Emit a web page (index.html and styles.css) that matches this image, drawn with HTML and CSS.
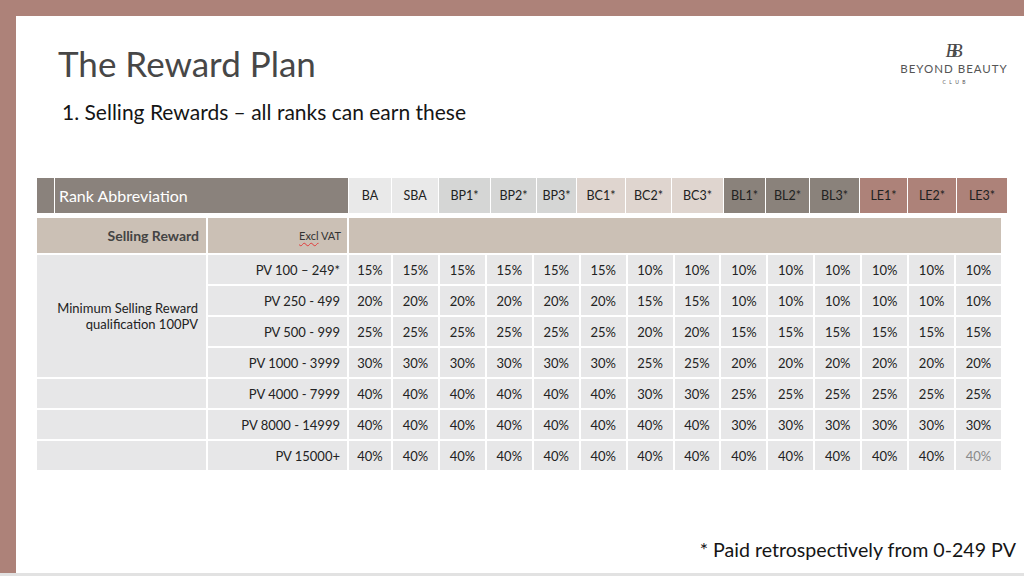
FILE: index.html
```html
<!DOCTYPE html>
<html lang="en">
<head>
<meta charset="utf-8">
<title>The Reward Plan</title>
<link rel="stylesheet" href="styles.css">
</head>
<body>
<div class="frame">
  <div class="bar-top"></div>
  <div class="bar-left"></div>
  <main class="content">
    <header class="head">
      <div class="titles">
        <h1 class="title">The Reward Plan</h1>
        <p class="subtitle">1. Selling Rewards – all ranks can earn these</p>
      </div>
      <div class="logo">
        <div class="mono">BB</div>
        <div class="brand">BEYOND BEAUTY</div>
        <div class="club">CLUB</div>
      </div>
    </header>

    <section class="rank-row">
      <div class="rank-stub"></div>
      <div class="rank-label">Rank Abbreviation</div>
      <div class="rank r-ba">BA</div>
      <div class="rank r-ba">SBA</div>
      <div class="rank r-bp">BP1*</div>
      <div class="rank r-bp">BP2*</div>
      <div class="rank r-bp">BP3*</div>
      <div class="rank r-bc">BC1*</div>
      <div class="rank r-bc">BC2*</div>
      <div class="rank r-bc">BC3*</div>
      <div class="rank r-bl">BL1*</div>
      <div class="rank r-bl">BL2*</div>
      <div class="rank r-bl">BL3*</div>
      <div class="rank r-le">LE1*</div>
      <div class="rank r-le">LE2*</div>
      <div class="rank r-le">LE3*</div>
    </section>

    <section class="grid">
      <div class="sr sr-label">Selling Reward</div>
      <div class="sr sr-vat"><span class="squiggle">Excl</span>&nbsp;VAT</div>
      <div class="sr sr-fill"></div>

      <div class="c c-min">Minimum Selling Reward<br>qualification 100PV</div>

      <div class="c c-pv">PV 100 – 249*</div>
      <div class="c">15%</div><div class="c">15%</div><div class="c">15%</div><div class="c">15%</div><div class="c">15%</div><div class="c">15%</div><div class="c">10%</div><div class="c">10%</div><div class="c">10%</div><div class="c">10%</div><div class="c">10%</div><div class="c">10%</div><div class="c">10%</div><div class="c">10%</div>

      <div class="c c-pv">PV 250 - 499</div>
      <div class="c">20%</div><div class="c">20%</div><div class="c">20%</div><div class="c">20%</div><div class="c">20%</div><div class="c">20%</div><div class="c">15%</div><div class="c">15%</div><div class="c">10%</div><div class="c">10%</div><div class="c">10%</div><div class="c">10%</div><div class="c">10%</div><div class="c">10%</div>

      <div class="c c-pv">PV 500 - 999</div>
      <div class="c">25%</div><div class="c">25%</div><div class="c">25%</div><div class="c">25%</div><div class="c">25%</div><div class="c">25%</div><div class="c">20%</div><div class="c">20%</div><div class="c">15%</div><div class="c">15%</div><div class="c">15%</div><div class="c">15%</div><div class="c">15%</div><div class="c">15%</div>

      <div class="c c-pv">PV 1000 - 3999</div>
      <div class="c">30%</div><div class="c">30%</div><div class="c">30%</div><div class="c">30%</div><div class="c">30%</div><div class="c">30%</div><div class="c">25%</div><div class="c">25%</div><div class="c">20%</div><div class="c">20%</div><div class="c">20%</div><div class="c">20%</div><div class="c">20%</div><div class="c">20%</div>

      <div class="c c-empty"></div>
      <div class="c c-pv">PV 4000 - 7999</div>
      <div class="c">40%</div><div class="c">40%</div><div class="c">40%</div><div class="c">40%</div><div class="c">40%</div><div class="c">40%</div><div class="c">30%</div><div class="c">30%</div><div class="c">25%</div><div class="c">25%</div><div class="c">25%</div><div class="c">25%</div><div class="c">25%</div><div class="c">25%</div>

      <div class="c c-empty"></div>
      <div class="c c-pv">PV 8000 - 14999</div>
      <div class="c">40%</div><div class="c">40%</div><div class="c">40%</div><div class="c">40%</div><div class="c">40%</div><div class="c">40%</div><div class="c">40%</div><div class="c">40%</div><div class="c">30%</div><div class="c">30%</div><div class="c">30%</div><div class="c">30%</div><div class="c">30%</div><div class="c">30%</div>

      <div class="c c-empty"></div>
      <div class="c c-pv">PV 15000+</div>
      <div class="c">40%</div><div class="c">40%</div><div class="c">40%</div><div class="c">40%</div><div class="c">40%</div><div class="c">40%</div><div class="c">40%</div><div class="c">40%</div><div class="c">40%</div><div class="c">40%</div><div class="c">40%</div><div class="c">40%</div><div class="c">40%</div><div class="c muted">40%</div>
    </section>

    <footer class="note">* Paid retrospectively from 0-249 PV</footer>
  </main>
  <div class="bar-bottom"></div>
</div>
</body>
</html>
```

FILE: styles.css
```css
* { box-sizing: border-box; }

html, body {
  margin: 0;
  padding: 0;
  background: #ffffff;
}

body {
  width: 1024px;
  height: 576px;
  overflow: hidden;
  font-family: Lato, "Open Sans", sans-serif;
  color: #222;
}

.frame {
  display: grid;
  grid-template-columns: 16px 1fr;
  grid-template-rows: 16px 1fr 3px;
  width: 1024px;
  height: 576px;
}

.bar-top {
  grid-column: 1 / -1;
  background: #ad8279;
}

.bar-left {
  background: #ad8279;
}

.bar-bottom {
  grid-column: 1 / -1;
  background: #e2e2e2;
}

.content {
  display: flex;
  flex-direction: column;
  padding: 25px 0 11px 21px;
  min-width: 0;
}

/* ---------- heading ---------- */
.head {
  display: flex;
  justify-content: space-between;
  align-items: flex-start;
}

.titles {
  padding-left: 21px;
}

.title {
  margin: 0;
  font-size: 35px;
  line-height: 44px;
  font-weight: 400;
  color: #474747;
}

.subtitle {
  margin: 15px 0 0 4px;
  font-size: 21px;
  line-height: 24px;
  color: #151515;
}

.logo {
  display: flex;
  flex-direction: column;
  align-items: center;
  width: 116px;
  margin-right: 12px;
  color: #555;
}

.mono {
  height: 20px;
  font-family: "Liberation Serif", serif;
  font-style: italic;
  font-size: 19px;
  line-height: 20px;
  letter-spacing: -6px;
  padding-right: 6px;
  color: #4a4a4a;
}

.brand {
  margin-top: 1px;
  font-size: 11.5px;
  line-height: 14px;
  letter-spacing: 1px;
  white-space: nowrap;
}

.club {
  margin-top: 3px;
  font-size: 5px;
  line-height: 6px;
  letter-spacing: 3.5px;
  padding-left: 3.5px;
}

/* ---------- rank header ---------- */
.rank-row {
  display: grid;
  grid-template-columns: 17px 293px 42px 46px 51px 45px 39px 48px 45px 51px 41px 43px 49px 47px 48px 50px;
  column-gap: 1px;
  height: 35px;
  margin-top: 54px;
  width: 970px;
}

.rank-stub,
.rank-label {
  background: #8a827c;
}

.rank-label {
  display: flex;
  align-items: center;
  padding-left: 4px;
  color: #ffffff;
  font-size: 16px;
}

.rank {
  display: flex;
  align-items: center;
  justify-content: center;
  font-size: 12.5px;
  color: #222;
}

.r-ba { background: #e9e9e9; }
.r-bp { background: #d5d6d5; }
.r-bc { background: #dfd5cf; }
.r-bl { background: #8a827b; }
.r-le { background: #ad8279; }

/* ---------- body grid ---------- */
.grid {
  display: grid;
  grid-template-columns: 169px 139px 42px repeat(13, 1fr);
  grid-template-rows: 35px repeat(7, 29px);
  gap: 2px;
  width: 964px;
  margin-top: 5px;
}

.sr {
  background: #cbc0b5;
  display: flex;
  align-items: center;
  justify-content: flex-end;
}

.sr-label {
  padding-right: 7px;
  font-size: 14px;
  font-weight: 700;
  color: #444;
}

.sr-vat {
  padding-right: 6px;
  font-size: 11px;
  color: #333;
}

.squiggle {
  text-decoration: underline wavy #e23b3b;
  text-decoration-thickness: 1px;
  text-underline-offset: 2px;
}

.sr-fill {
  grid-column: 3 / -1;
}

.c {
  background: #e7e7e8;
  display: flex;
  align-items: center;
  justify-content: center;
  font-size: 13px;
  color: #222;
}

.c-min {
  grid-row: span 4;
  justify-content: flex-end;
  text-align: right;
  padding-right: 8px;
  font-size: 13px;
  line-height: 16px;
}

.c-pv {
  justify-content: flex-end;
  padding-right: 7px;
}

.muted {
  color: #8a8a8a;
}

/* ---------- footnote ---------- */
.note {
  margin-top: auto;
  align-self: flex-end;
  padding-right: 8px;
  font-size: 19.6px;
  line-height: 24px;
  color: #151515;
}
```
